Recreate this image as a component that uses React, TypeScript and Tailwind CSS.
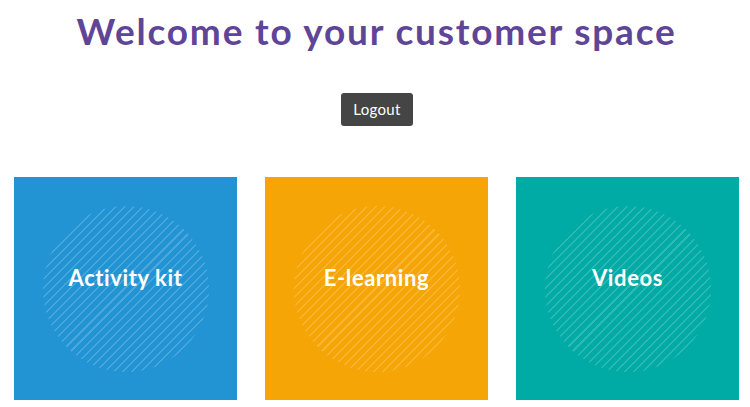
const tiles = [
  { label: "Activity kit", bg: "bg-[#2394d3]" },
  { label: "E-learning", bg: "bg-[#f5a505]" },
  { label: "Videos", bg: "bg-[#00aaa5]" },
];

export default function App() {
  return (
    <div className="w-[750px] h-[407px] overflow-hidden bg-white font-['Lato','Open_Sans',sans-serif]">
      {/* Heading */}
      <h1 className="pt-[9px] pl-[3px] text-center text-[37px] leading-[44px] font-bold tracking-[1.8px] text-[#5f4597]">
        Welcome to your customer space
      </h1>

      <div className="mt-[40px] flex justify-center pl-[4px]">
        <button className="h-[33px] w-[72px] rounded-[3px] bg-[#454545] text-[15px] tracking-[0.3px] text-white">
          Logout
        </button>
      </div>

      {/* Tiles */}
      <div className="mt-[51px] ml-[14px] flex gap-[28px]">
        {tiles.map((t) => (
          <div key={t.label} className={`${t.bg} flex h-[223px] w-[223px] items-center justify-center`}>
            <div className="flex h-[166px] w-[166px] items-center justify-center rounded-full [background-image:repeating-linear-gradient(135deg,rgba(255,255,255,0.18)_0px,rgba(255,255,255,0.18)_1.5px,transparent_1.5px,transparent_6.4px)]">
              <span className="-mt-[22px] text-[22px] font-bold tracking-[0.6px] text-white">{t.label}</span>
            </div>
          </div>
        ))}
      </div>
    </div>
  );
}
